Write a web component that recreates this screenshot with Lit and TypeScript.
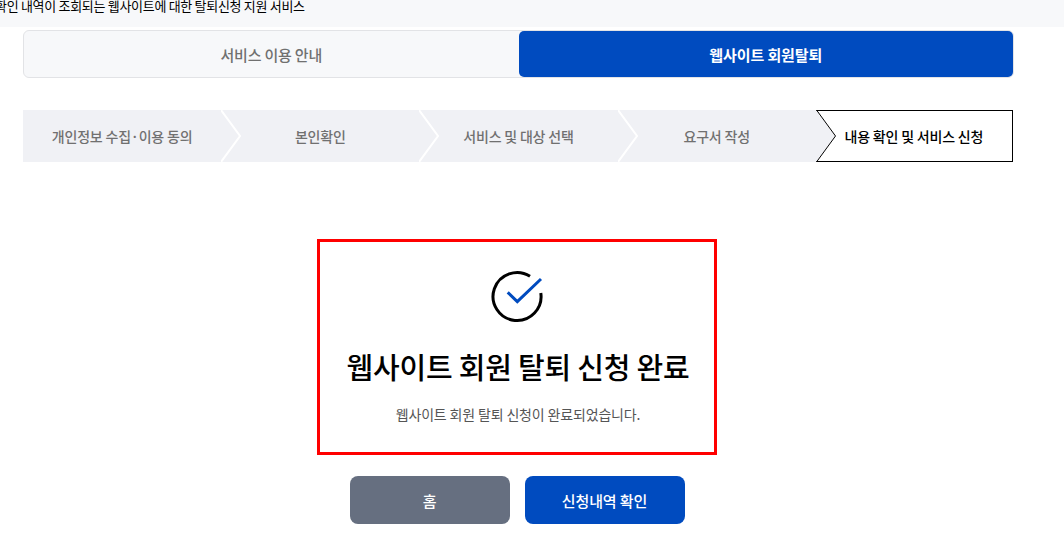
import { LitElement, html, css } from 'lit';
import { customElement } from 'lit/decorators.js';

const STEPS = [
  '개인정보 수집·이용 동의',
  '본인확인',
  '서비스 및 대상 선택',
  '요구서 작성',
  '내용 확인 및 서비스 신청',
];

@customElement('app-root')
export class AppRoot extends LitElement {
  static styles = css`
    :host {
      display: block;
      width: 1064px;
      height: 557px;
      overflow: hidden;
      background: #fff;
      font-family: 'Noto Sans CJK KR', 'Noto Sans', sans-serif;
      color: #000;
    }

    .top {
      height: 27px;
      background: #f7f8fa;
      font-size: 13px;
      line-height: 12px;
      letter-spacing: -0.3px;
      white-space: nowrap;
      text-indent: -5px;
      overflow: hidden;
    }

    .content {
      padding: 3px 50px 0 23px;
    }

    .tabs {
      display: flex;
      box-sizing: border-box;
      width: 991px;
      height: 48px;
      background: #f7f8fa;
      border: 1px solid #e2e3e6;
      border-radius: 6px;
    }

    .tab {
      flex: 1;
      display: flex;
      align-items: center;
      justify-content: center;
      font-size: 15px;
      font-weight: 500;
      letter-spacing: -0.2px;
      color: #707070;
    }

    .tab.on {
      background: #004bbf;
      color: #fff;
      font-weight: 700;
      letter-spacing: -0.1px;
      border-radius: 5px;
    }

    .steps {
      display: flex;
      width: 990px;
      height: 52px;
      margin-top: 32px;
    }

    .step {
      position: relative;
      flex: 0 0 198.2px;
      display: flex;
      align-items: center;
      justify-content: center;
      background: #f0f1f5;
      color: #707070;
      font-size: 14px;
      font-weight: 500;
      letter-spacing: -0.2px;
    }

    .step.current {
      flex: 0 0 197.2px;
      background: #fff;
      color: #000;
      box-sizing: border-box;
      border: 1px solid #000;
      border-left: none;
    }

    .step svg {
      position: absolute;
      left: 100%;
      top: 0;
      z-index: 1;
    }

    .step.current svg {
      left: 0;
      top: -1px;
    }

    .notice {
      box-sizing: border-box;
      width: 400px;
      height: 216px;
      margin: 77px 0 0 294px;
      padding-top: 26px;
      border: 3px solid #f00;
      display: flex;
      flex-direction: column;
      align-items: center;
    }

    .notice svg {
      display: block;
    }

    h2 {
      margin: 22px 0 0;
      padding-left: 2px;
      font-size: 29px;
      line-height: 40px;
      font-weight: 500;
      letter-spacing: -0.2px;
    }

    p {
      margin: 18px 0 0;
      padding-left: 2px;
      font-size: 14px;
      line-height: 20px;
      letter-spacing: -0.16px;
      color: #555;
    }

    .actions {
      display: flex;
      justify-content: center;
      gap: 15px;
      width: 988px;
      margin-top: 21px;
    }

    button {
      width: 160px;
      height: 48px;
      border: none;
      border-radius: 8px;
      color: #fff;
      font: 500 15px 'Noto Sans CJK KR', sans-serif;
      letter-spacing: -0.1px;
      padding: 0;
    }

    .home {
      background: #666f80;
    }

    .history {
      background: #004bbf;
    }
  `;

  render() {
    return html`
      <div class="top">확인 내역이 조회되는 웹사이트에 대한 탈퇴신청 지원 서비스</div>
      <div class="content">
        <div class="tabs">
          <div class="tab">서비스 이용 안내</div>
          <div class="tab on">웹사이트 회원탈퇴</div>
        </div>
        <div class="steps">
          ${STEPS.map((label, i) => this.renderStep(label, i))}
        </div>
        <div class="notice">
          <svg width="56" height="56" viewBox="0 0 56 56" fill="none">
            <path
              d="M41 8.3A24 24 0 1 0 51.8 25"
              stroke="#000"
              stroke-width="3"
            ></path>
            <path
              d="M18.7 24.3L28.3 33.6L52 11"
              stroke="#004bbf"
              stroke-width="3"
            ></path>
          </svg>
          <h2>웹사이트 회원 탈퇴 신청 완료</h2>
          <p>웹사이트 회원 탈퇴 신청이 완료되었습니다.</p>
        </div>
        <div class="actions">
          <button class="home">홈</button>
          <button class="history">신청내역 확인</button>
        </div>
      </div>
    `;
  }

  renderStep(label: string, i: number) {
    const last = i === STEPS.length - 1;
    if (last) {
      return html`
        <div class="step current">
          <svg width="21" height="52" viewBox="0 0 21 52" fill="none">
            <path d="M0 0L19 26L0 52" fill="#f0f1f5"></path>
            <path d="M0.5 0L19.5 26L0.5 52" stroke="#000"></path>
          </svg>
          ${label}
        </div>
      `;
    }
    return html`
      <div class="step">
        ${label}
        ${i < STEPS.length - 2
          ? html`<svg width="21" height="52" viewBox="0 0 21 52" fill="none">
              <path d="M0 0L19 26L0 52" stroke="#fff" stroke-width="2"></path>
            </svg>`
          : ''}
      </div>
    `;
  }
}
